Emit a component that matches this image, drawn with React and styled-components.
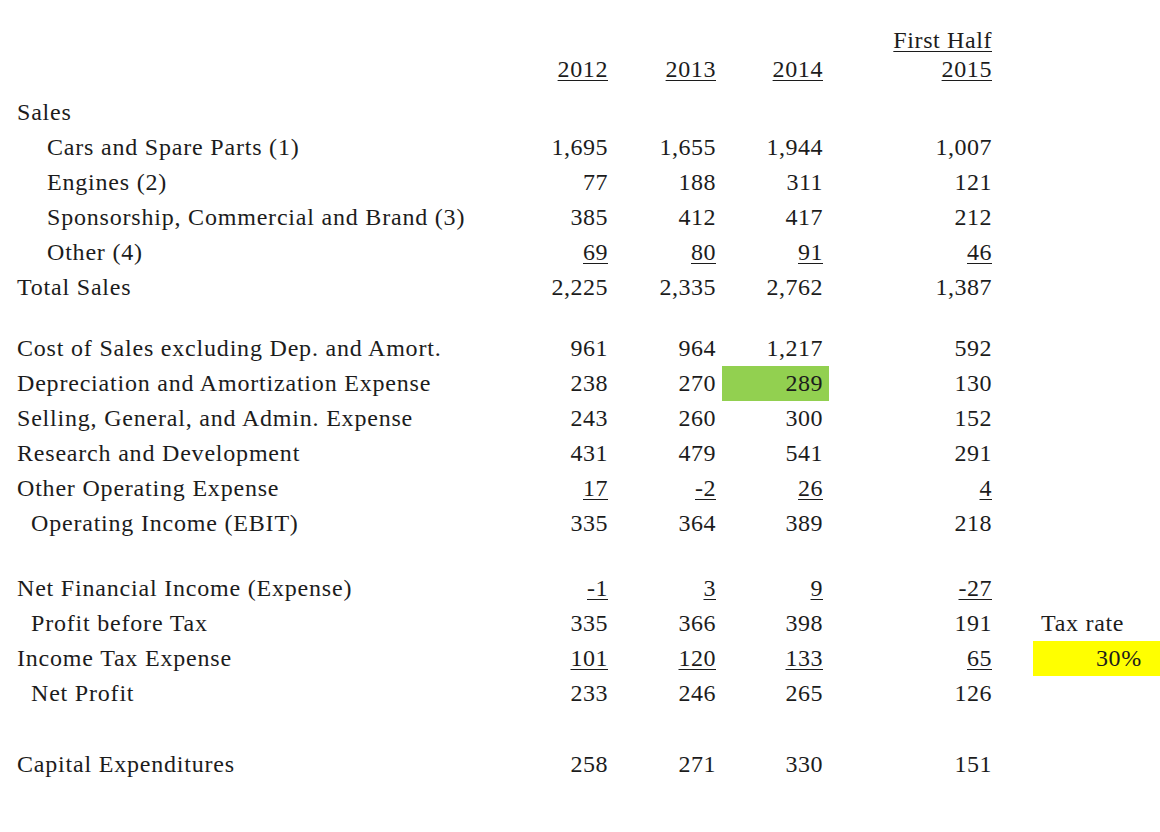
import React from "react";
import styled, { createGlobalStyle } from "styled-components";

const GlobalStyle = createGlobalStyle`
  body {
    margin: 0;
    background: #fff;
    font-family: "Liberation Serif", "Times New Roman", serif;
    color: #1c1c1c;
  }
`;

const COLUMNS = "507px 107px 108px 107px 169px 35px 127px";

const Sheet = styled.div`
  width: 1160px;
  height: 832px;
  display: flex;
  flex-direction: column;
  font-size: 24px;
`;

const Row = styled.div`
  display: grid;
  grid-template-columns: ${COLUMNS};
  height: ${(props) => props.$height || 35}px;
`;

const HeaderRow = styled(Row)`
  align-items: end;
  padding-bottom: 11px;
  box-sizing: border-box;
  line-height: 29px;
`;

const Label = styled.div`
  display: flex;
  align-items: center;
  padding-left: ${(props) => 17 + (props.$indent || 0)}px;
  white-space: nowrap;
  letter-spacing: 0.8px;
`;

const Num = styled.div`
  display: flex;
  align-items: center;
  justify-content: flex-end;
  padding-right: 6px;
  letter-spacing: 0.5px;
  background: ${(props) => props.$fill || "transparent"};
  text-decoration: ${(props) => (props.$under ? "underline" : "none")};
  text-underline-offset: 3px;
  text-decoration-thickness: 1px;
`;

const Head = styled.div`
  text-align: right;
  padding-right: 6px;
  letter-spacing: 0.6px;
  text-decoration: underline;
  text-underline-offset: 3px;
  text-decoration-thickness: 1px;
`;

const Side = styled.div`
  display: flex;
  align-items: center;
  padding-left: 8px;
  letter-spacing: 0.7px;
  background: ${(props) => props.$fill || "transparent"};
  justify-content: ${(props) => (props.$right ? "flex-end" : "flex-start")};
  padding-right: ${(props) => (props.$right ? 18 : 0)}px;
`;

const rows = [
  { label: "Sales" },
  { label: "Cars and Spare Parts (1)", indent: 30, v: ["1,695", "1,655", "1,944", "1,007"] },
  { label: "Engines (2)", indent: 30, v: ["77", "188", "311", "121"] },
  { label: "Sponsorship, Commercial and Brand (3)", indent: 30, v: ["385", "412", "417", "212"] },
  { label: "Other (4)", indent: 30, v: ["69", "80", "91", "46"], under: true },
  { label: "Total Sales", v: ["2,225", "2,335", "2,762", "1,387"] },
  { gap: 26 },
  { label: "Cost of Sales excluding Dep. and Amort.", v: ["961", "964", "1,217", "592"] },
  { label: "Depreciation and Amortization Expense", v: ["238", "270", "289", "130"], green: 2 },
  { label: "Selling, General, and Admin. Expense", v: ["243", "260", "300", "152"] },
  { label: "Research and Development", v: ["431", "479", "541", "291"] },
  { label: "Other Operating Expense", v: ["17", "-2", "26", "4"], under: true },
  { label: "Operating Income (EBIT)", indent: 14, v: ["335", "364", "389", "218"] },
  { gap: 30 },
  { label: "Net Financial Income (Expense)", v: ["-1", "3", "9", "-27"], under: true },
  { label: "Profit before Tax", indent: 14, v: ["335", "366", "398", "191"], side: "Tax rate" },
  { label: "Income Tax Expense", v: ["101", "120", "133", "65"], under: true, rate: "30%" },
  { label: "Net Profit", indent: 14, v: ["233", "246", "265", "126"] },
  { gap: 36 },
  { label: "Capital Expenditures", v: ["258", "271", "330", "151"] },
];

export default function App() {
  return (
    <Sheet>
      <GlobalStyle />
      <HeaderRow $height={95}>
        <div />
        <Head>2012</Head>
        <Head>2013</Head>
        <Head>2014</Head>
        <Head>
          First Half
          <br />
          2015
        </Head>
      </HeaderRow>

      {rows.map((row, index) =>
        row.gap ? (
          <Row key={index} $height={row.gap} />
        ) : (
          <Row key={index}>
            <Label $indent={row.indent}>{row.label}</Label>
            {(row.v || ["", "", "", ""]).map((value, i) => (
              <Num
                key={i}
                $under={row.under}
                $fill={row.green === i ? "#92d050" : undefined}
              >
                {value}
              </Num>
            ))}
            <div />
            {row.side && <Side>{row.side}</Side>}
            {row.rate && (
              <Side $fill="#ffff00" $right>
                {row.rate}
              </Side>
            )}
          </Row>
        )
      )}
    </Sheet>
  );
}
